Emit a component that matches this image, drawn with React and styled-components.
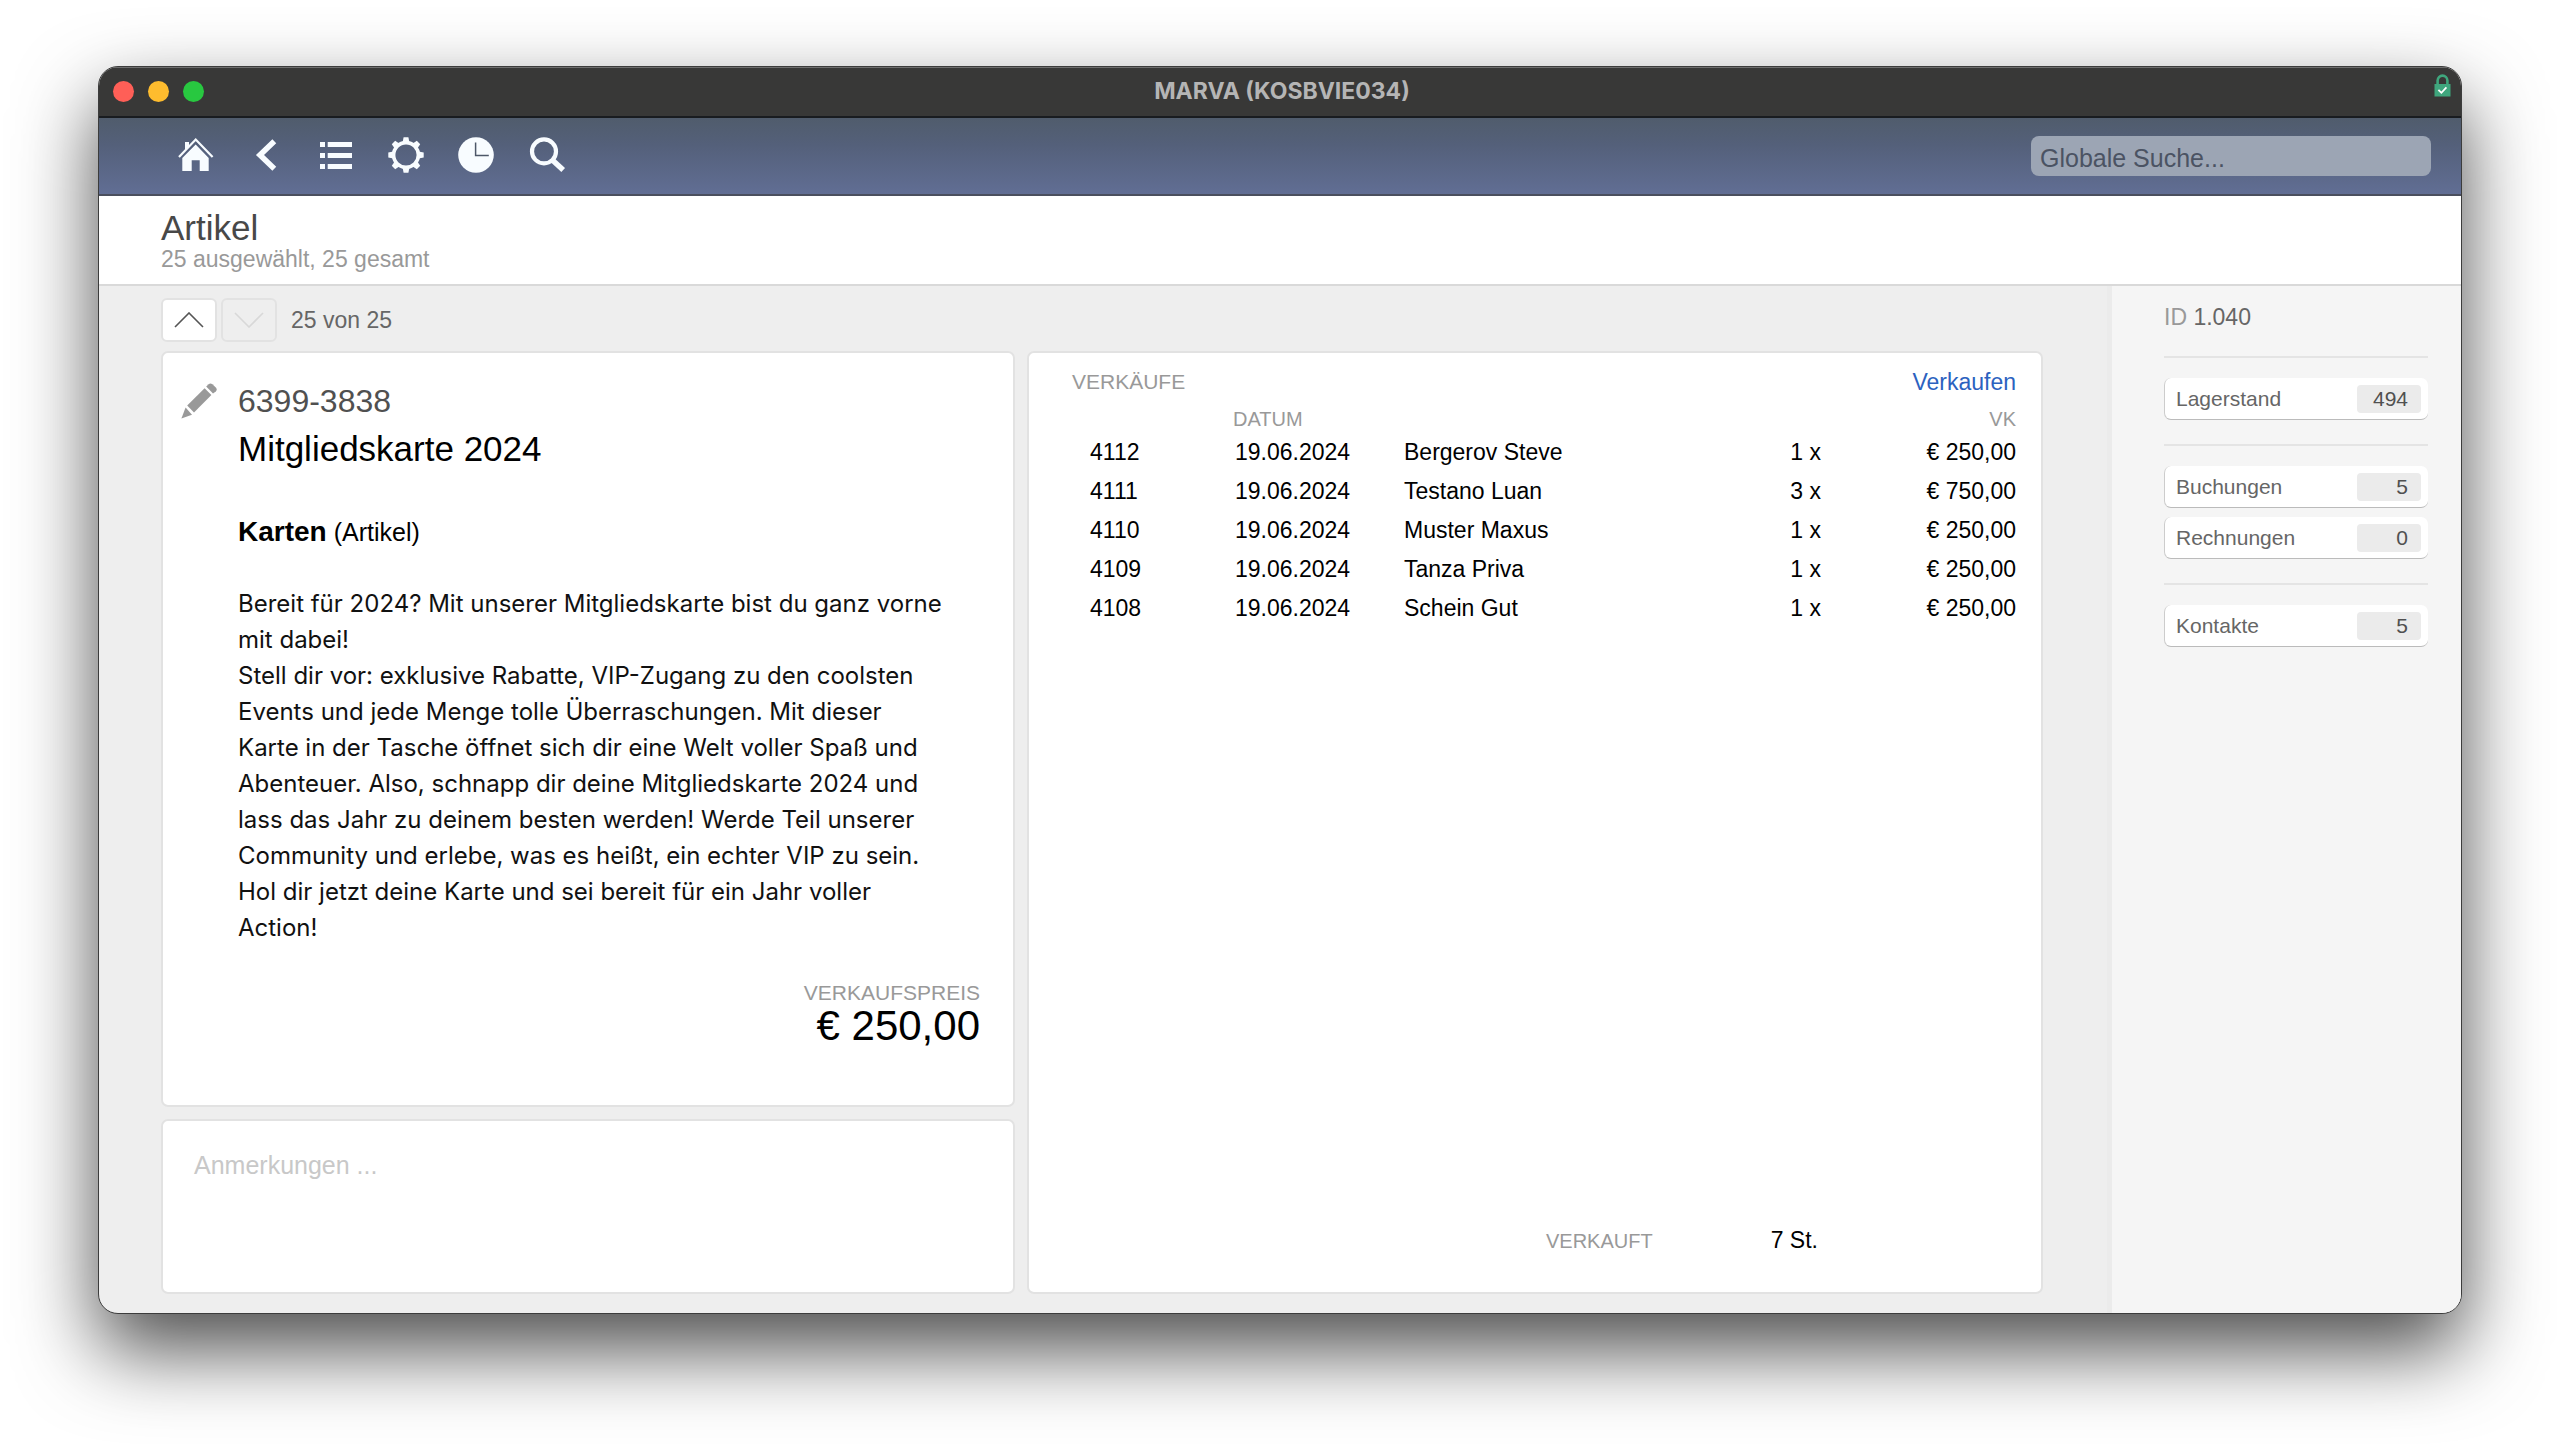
import React from 'react'
import styled, { createGlobalStyle } from 'styled-components'

const sales = [
    { id: '4112', date: '19.06.2024', name: 'Bergerov Steve', amount: '1 x', price: '€ 250,00' },
    { id: '4111', date: '19.06.2024', name: 'Testano Luan', amount: '3 x', price: '€ 750,00' },
    { id: '4110', date: '19.06.2024', name: 'Muster Maxus', amount: '1 x', price: '€ 250,00' },
    { id: '4109', date: '19.06.2024', name: 'Tanza Priva', amount: '1 x', price: '€ 250,00' },
    { id: '4108', date: '19.06.2024', name: 'Schein Gut', amount: '1 x', price: '€ 250,00' },
]

const linkGroups = [
    [{ label: 'Lagerstand', count: 494 }],
    [{ label: 'Buchungen', count: 5 }, { label: 'Rechnungen', count: 0 }],
    [{ label: 'Kontakte', count: 5 }],
]

const description = `Bereit für 2024? Mit unserer Mitgliedskarte bist du ganz vorne
mit dabei!
Stell dir vor: exklusive Rabatte, VIP-Zugang zu den coolsten
Events und jede Menge tolle Überraschungen. Mit dieser
Karte in der Tasche öffnet sich dir eine Welt voller Spaß und
Abenteuer. Also, schnapp dir deine Mitgliedskarte 2024 und
lass das Jahr zu deinem besten werden! Werde Teil unserer
Community und erlebe, was es heißt, ein echter VIP zu sein.
Hol dir jetzt deine Karte und sei bereit für ein Jahr voller
Action!`

const HomeIcon = () => (
    <svg width="36" height="36" viewBox="0 0 36 36" fill="currentColor">
        <path d="M7 13.5V5h4v4.5z" />
        <path d="M1 20 17.7 2.6 34.6 20" fill="none" stroke="currentColor" strokeWidth="2.2" />
        <path d="M17.7 7.6 30.7 21v13h-9V23.3h-8V34H4.3V21z" />
    </svg>
)

const BackIcon = () => (
    <svg width="36" height="36" viewBox="0 0 36 36" fill="none" stroke="currentColor" strokeWidth="5.6">
        <path d="M26.3 4.3 12 18l14.3 13.7" />
    </svg>
)

const ListIcon = () => (
    <svg width="36" height="36" viewBox="0 0 36 36" fill="currentColor">
        <path d="M2 5h5v5H2zM9.7 5H34v5H9.7zM2 16h5v5H2zM9.7 16H34v5H9.7zM2 27h5v5H2zM9.7 27H34v5H9.7z" />
    </svg>
)

const GearIcon = () => (
    <svg width="36" height="36" viewBox="0 0 36 36" fill="currentColor">
        <circle cx="18" cy="18" r="12.4" fill="none" stroke="currentColor" strokeWidth="3.6" />
        {[0, 45, 90, 135, 180, 225, 270, 315].map((angle) => (
            <path key={angle} d="M15.6 0.3h4.8l1 5.2h-6.8z" transform={`rotate(${angle} 18 18)`} />
        ))}
    </svg>
)

const ClockIcon = () => (
    <svg width="36" height="36" viewBox="0 0 36 36">
        <circle cx="18" cy="18" r="17.8" fill="currentColor" />
        <path d="M17.6 5.5v13h13.2" fill="none" stroke="#4d5768" strokeWidth="1.5" />
    </svg>
)

const SearchIcon = () => (
    <svg width="38" height="36" viewBox="0 0 38 36" fill="none" stroke="currentColor">
        <circle cx="16" cy="14.4" r="12" strokeWidth="4.2" />
        <path d="M24.6 23.2 35.2 33" strokeWidth="5.4" />
    </svg>
)

const PencilIcon = () => (
    <svg width="36" height="36" viewBox="0 0 36 36" fill="currentColor">
        <path d="M0.4 35.6 4.6 24.6 11 31.8z" />
        <path d="M6.2 22.6 23.6 5.2 30.4 12 13 29.6z" />
        <path d="M25.2 3.6 27.6 1.2q1.8-1.6 3.8 0l3.4 3.4q1.8 2 0 3.8L32 10.4z" />
    </svg>
)

const LockIcon = () => (
    <svg width="17" height="23" viewBox="0 0 17 23">
        <path d="M3.6 11V6.6a4.9 5 0 0 1 9.8 0V11" fill="none" stroke="#3fa67d" strokeWidth="2.6" />
        <path d="M0.5 10h16v12.4H0.5z" fill="#3fa67d" />
        <path d="M4.4 15.8 7.4 18.8 12.4 13.4" fill="none" stroke="#fff" strokeWidth="1.8" />
    </svg>
)

const Chevron = ({ down }) => (
    <svg width="30" height="16" viewBox="0 0 30 16" fill="none" stroke="currentColor" strokeWidth="1.6">
        <path d={down ? 'M1 1l14 14 14-14' : 'M1 15 15 1l14 14'} />
    </svg>
)

function App() {
    return (
        <Page>
            <GlobalStyle />
            <Window>
                <TitleBar>
                    <Lights>
                        <Light $color="#ff5f57" aria-label="Schließen" />
                        <Light $color="#febc2e" aria-label="Minimieren" />
                        <Light $color="#28c840" aria-label="Zoomen" />
                    </Lights>
                    <WindowTitle>MARVA (KOSBVIE034)</WindowTitle>
                    <LockSlot><LockIcon /></LockSlot>
                </TitleBar>

                <Toolbar>
                    <ToolNav>
                        <ToolButton aria-label="Start"><HomeIcon /></ToolButton>
                        <ToolButton aria-label="Zurück"><BackIcon /></ToolButton>
                        <ToolButton aria-label="Liste"><ListIcon /></ToolButton>
                        <ToolButton aria-label="Einstellungen"><GearIcon /></ToolButton>
                        <ToolButton aria-label="Verlauf"><ClockIcon /></ToolButton>
                        <ToolButton aria-label="Suchen"><SearchIcon /></ToolButton>
                    </ToolNav>
                    <SearchInput type="text" aria-label="Globale Suche" placeholder="Globale Suche..." />
                </Toolbar>

                <PageHeader>
                    <h1>Artikel</h1>
                    <p>25 ausgewählt, 25 gesamt</p>
                </PageHeader>

                <Body>
                    <Main>
                        <Pager>
                            <PagerButton aria-label="Vorheriger"><Chevron /></PagerButton>
                            <PagerButton aria-label="Nächster" disabled><Chevron down /></PagerButton>
                            <span>25 von 25</span>
                        </Pager>

                        <Columns>
                            <Stack>
                                <ArticleCard>
                                    <EditButton aria-label="Bearbeiten"><PencilIcon /></EditButton>
                                    <Article>
                                        <ArticleNumber>6399-3838</ArticleNumber>
                                        <ArticleName>Mitgliedskarte 2024</ArticleName>
                                        <Category><strong>Karten</strong> (Artikel)</Category>
                                        <Description>{description}</Description>
                                        <PriceLabel>VERKAUFSPREIS</PriceLabel>
                                        <Price>€ 250,00</Price>
                                    </Article>
                                </ArticleCard>
                                <Notes aria-label="Anmerkungen" placeholder="Anmerkungen ..." />
                            </Stack>

                            <SalesCard>
                                <SalesHeader>
                                    <h2>VERKÄUFE</h2>
                                    <a href="#verkaufen">Verkaufen</a>
                                </SalesHeader>
                                <SalesTable>
                                    <colgroup>
                                        <col className="id" />
                                        <col className="date" />
                                        <col />
                                        <col className="amount" />
                                        <col className="price" />
                                    </colgroup>
                                    <thead>
                                        <tr>
                                            <th></th>
                                            <th>DATUM</th>
                                            <th></th>
                                            <th></th>
                                            <th className="right">VK</th>
                                        </tr>
                                    </thead>
                                    <tbody>
                                        {sales.map((sale) => (
                                            <tr key={sale.id}>
                                                <td className="first">{sale.id}</td>
                                                <td className="day">{sale.date}</td>
                                                <td>{sale.name}</td>
                                                <td className="right">{sale.amount}</td>
                                                <td className="right">{sale.price}</td>
                                            </tr>
                                        ))}
                                    </tbody>
                                </SalesTable>
                                <SalesTotal>
                                    <small>VERKAUFT</small>
                                    <span>7 St.</span>
                                </SalesTotal>
                            </SalesCard>
                        </Columns>
                    </Main>

                    <Sidebar>
                        <RecordId><span>ID</span> 1.040</RecordId>
                        {linkGroups.map((group) => (
                            <LinkGroup key={group[0].label}>
                                {group.map((item) => (
                                    <LinkButton key={item.label}>
                                        {item.label}
                                        <Count>{item.count}</Count>
                                    </LinkButton>
                                ))}
                            </LinkGroup>
                        ))}
                    </Sidebar>
                </Body>
            </Window>
        </Page>
    )
}

const GlobalStyle = createGlobalStyle`
    *{
        box-sizing: border-box;
        margin: 0;
        padding: 0;
    }

    body{
        background: #fff;
        color: #000;
        font-family: "Liberation Sans", Arial, sans-serif;
        font-size: 23px;
    }

    button, input, textarea{
        font: inherit;
        border: none;
        outline: none;
    }

    button{
        background: none;
        cursor: pointer;
    }

    svg{
        display: block;
    }
`;

const Page = styled.div`
    display: flex;
    min-height: 100vh;
    padding: 66px 98px 130px;
    overflow: hidden;
`;

const Window = styled.div`
    flex: 1;
    display: flex;
    flex-direction: column;
    min-width: 0;
    overflow: hidden;
    border: 1px solid #3c3c3c;
    border-radius: 20px;
    background: #eee;
    box-shadow: 0 36px 80px rgba(0, 0, 0, .7);
`;

const TitleBar = styled.header`
    display: grid;
    grid-template-columns: 1fr auto 1fr;
    align-items: center;
    height: 51px;
    padding: 0 10px 2px 14px;
    background: #383837;
    border-top: 1px solid #6e6e6e;
    border-bottom: 2px solid #191c20;
`;

const Lights = styled.div`
    display: flex;
    gap: 14px;
`;

const Light = styled.button`
    width: 21px;
    height: 21px;
    border-radius: 50%;
    background: ${(props) => props.$color};
`;

const WindowTitle = styled.div`
    font-family: Inter, sans-serif;
    font-weight: 700;
    font-size: 23px;
    line-height: 28px;
    color: #b5b5b5;
`;

const LockSlot = styled.div`
    align-self: start;
    justify-self: end;
    padding-top: 6px;
`;

const Toolbar = styled.nav`
    display: flex;
    align-items: center;
    justify-content: space-between;
    height: 78px;
    padding: 0 30px 0 79px;
    background: linear-gradient(#505c6c, #54607a 35%, #616e94);
    border-bottom: 2px solid #4a4f5e;
`;

const ToolNav = styled.div`
    display: flex;
    gap: 34px;
    padding-bottom: 2px;
`;

const ToolButton = styled.button`
    width: 36px;
    height: 36px;
    color: #f8fcff;

    svg{
        overflow: visible;
    }
`;

const SearchInput = styled.input`
    width: 400px;
    height: 40px;
    padding: 4px 9px 0;
    border-radius: 8px;
    background: #9ca5b4;
    color: #454d5c;
    font-size: 25px;

    &::placeholder{
        color: #4b5363;
        opacity: 1;
    }
`;

const PageHeader = styled.div`
    padding: 14px 62px 12px;
    background: #fff;
    border-bottom: 2px solid #d9d9d9;

    h1{
        font-weight: 400;
        font-size: 35px;
        line-height: 36px;
        color: #484848;
    }

    p{
        line-height: 26px;
        color: #999;
    }
`;

const Body = styled.div`
    flex: 1;
    display: flex;
`;

const Main = styled.main`
    flex: 1;
    display: flex;
    flex-direction: column;
    min-width: 0;
    padding: 12px 64px 19px 62px;
`;

const Pager = styled.div`
    display: flex;
    align-items: center;
    gap: 4px;
    margin-bottom: 9px;
    color: #666;

    span{
        margin-left: 10px;
    }
`;

const PagerButton = styled.button`
    display: flex;
    align-items: center;
    justify-content: center;
    width: 56px;
    height: 44px;
    border: 2px solid #e2e2e2;
    border-radius: 6px;
    background: #fff;
    color: #555;

    &:disabled{
        background: transparent;
        color: #d8d8d8;
    }
`;

const Columns = styled.div`
    flex: 1;
    display: grid;
    grid-template-columns: minmax(0, 854fr) minmax(0, 1016fr);
    gap: 12px;
`;

const Stack = styled.div`
    display: flex;
    flex-direction: column;
    gap: 12px;
`;

const Card = styled.section`
    background: #fff;
    border: 2px solid #e2e2e2;
    border-radius: 7px;
`;

const ArticleCard = styled(Card)`
    flex: 1;
    display: flex;
    align-items: flex-start;
    gap: 21px;
    padding: 30px 33px 30px 18px;
`;

const EditButton = styled.button`
    color: #999;
`;

const Article = styled.article`
    flex: 1;
`;

const ArticleNumber = styled.p`
    font-size: 32px;
    line-height: 36px;
    color: #505050;
`;

const ArticleName = styled.h2`
    margin: 10px 0 47px;
    font-weight: 400;
    font-size: 35px;
    line-height: 40px;
`;

const Category = styled.p`
    margin-bottom: 38px;
    font-size: 25px;
    line-height: 32px;

    strong{
        font-size: 28px;
    }
`;

const Description = styled.p`
    font-family: Inter, sans-serif;
    font-size: 24px;
    line-height: 36px;
    white-space: pre-line;
    color: #111;
`;

const PriceLabel = styled.p`
    margin-top: 35px;
    font-size: 21px;
    line-height: 24px;
    text-align: right;
    color: #999;
`;

const Price = styled.p`
    font-size: 42px;
    line-height: 42px;
    text-align: right;
`;

const Notes = styled.textarea`
    height: 175px;
    padding: 30px 31px;
    background: #fff;
    border: 2px solid #e2e2e2;
    border-radius: 7px;
    font-size: 25px;
    line-height: 28px;
    resize: none;

    &::placeholder{
        color: #c8c8c8;
        opacity: 1;
    }
`;

const SalesCard = styled(Card)`
    display: flex;
    flex-direction: column;
    padding: 15px 25px 37px 43px;
`;

const SalesHeader = styled.div`
    display: flex;
    justify-content: space-between;
    line-height: 28px;
    margin-bottom: 11px;

    h2{
        font-weight: 400;
        font-size: 21px;
        color: #999;
    }

    a{
        color: #2c62bf;
        text-decoration: none;
    }
`;

const SalesTable = styled.table`
    width: 100%;
    table-layout: fixed;
    border-collapse: collapse;

    .id{
        width: 161px;
    }

    .date{
        width: 171px;
    }

    .amount{
        width: 120px;
    }

    .price{
        width: 195px;
    }

    th{
        height: 26px;
        padding-bottom: 2px;
        font-weight: 400;
        font-size: 20px;
        line-height: 24px;
        text-align: left;
        color: #999;
    }

    td{
        height: 39px;
    }

    .first{
        padding-left: 18px;
    }

    .day{
        padding-left: 2px;
    }

    .right{
        text-align: right;
    }
`;

const SalesTotal = styled.div`
    display: flex;
    align-items: baseline;
    justify-content: flex-end;
    gap: 118px;
    margin-top: auto;
    padding-right: 198px;
    line-height: 28px;

    small{
        font-size: 20px;
        color: #999;
    }
`;

const Sidebar = styled.aside`
    width: 354px;
    padding: 17px 33px 20px 52px;
    background: #f5f5f5;
    border-left: 5px solid #ebebeb;
`;

const RecordId = styled.p`
    margin-bottom: 25px;
    line-height: 28px;
    color: #666;

    span{
        color: #999;
    }
`;

const LinkGroup = styled.div`
    display: flex;
    flex-direction: column;
    gap: 9px;
    padding: 20px 0 24px;
    border-top: 2px solid #e4e4e4;
`;

const LinkButton = styled.button`
    display: flex;
    align-items: center;
    justify-content: space-between;
    height: 42px;
    padding: 0 7px 0 11px;
    background: #fff;
    border-left: 1px solid #ccc;
    border-bottom: 1px solid #bbb;
    border-radius: 7px;
    font-size: 21px;
    color: #666;
`;

const Count = styled.span`
    width: 64px;
    padding-right: 13px;
    border-radius: 4px;
    background: #ebebeb;
    font-size: 21px;
    line-height: 28px;
    text-align: right;
    color: #505050;
`;

export default App
